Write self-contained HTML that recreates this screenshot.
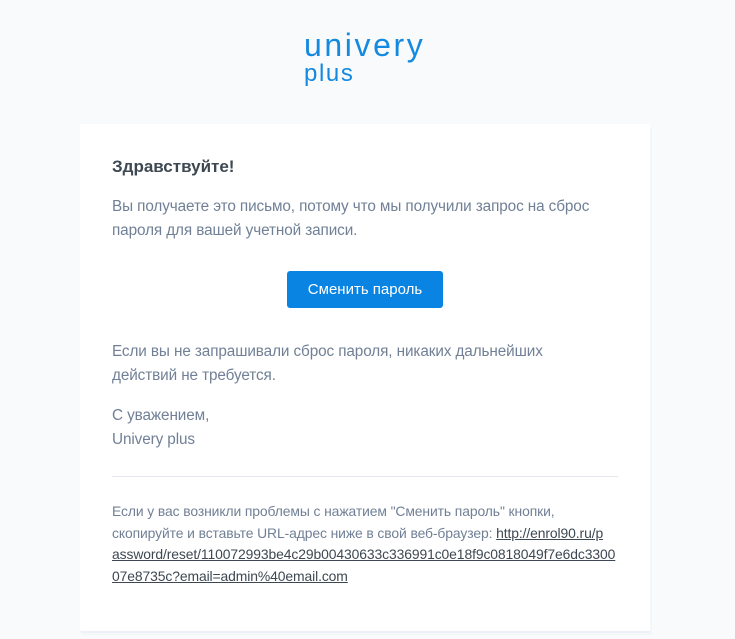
<!DOCTYPE html>
<html><head><meta charset="utf-8"><style>
html,body{margin:0;padding:0;background:#f8fafc;width:735px;height:639px;overflow:hidden;font-family:"Liberation Sans",sans-serif;}
.logo{position:absolute;left:304px;top:30px;color:#1489e0;font-size:32px;line-height:30px;letter-spacing:2.6px;}
.logo .p{font-size:24px;line-height:28px;display:block;letter-spacing:1.6px;}
.card{position:absolute;left:80px;top:124px;width:570px;height:507px;background:#fff;box-shadow:0 2px 0 rgba(0,0,150,0.025),2px 4px 0 rgba(0,0,150,0.015);}
.in{position:absolute;left:32px;width:520px;}
p{margin:0;color:#718096;font-size:15.3px;line-height:24px;letter-spacing:-0.1px;}
.btn{position:absolute;left:207px;top:147px;width:156px;height:37px;background:#0a84e3;border-radius:3px;color:#fff;font-size:15px;line-height:37px;text-align:center;}
.hr{position:absolute;left:32px;top:352px;width:506px;border-top:1px solid #e8e5ef;}
.sm{font-size:13.9px;line-height:21.7px;color:#718096;letter-spacing:-0.1px;}
.sm a{color:#3d4852;text-decoration:underline;}
</style></head><body>
<div class="logo">univery<span class="p">plus</span></div>
<div class="card">
<div class="in" style="top:33px"><b style="font-size:17px;color:#3d4852">Здравствуйте!</b></div>
<div class="in" style="top:71px"><p>Вы получаете это письмо, потому что мы получили запрос на сброс<br>пароля для вашей учетной записи.</p></div>
<div class="btn">Сменить пароль</div>
<div class="in" style="top:216px"><p>Если вы не запрашивали сброс пароля, никаких дальнейших<br>действий не требуется.</p></div>
<div class="in" style="top:280px"><p>С уважением,<br>Univery plus</p></div>
<div class="hr"></div>
<div class="in sm" style="top:377px">Если у вас возникли проблемы с нажатием "Сменить пароль" кнопки,<br>скопируйте и вставьте URL-адрес ниже в свой веб-браузер: <a>http://enrol90.ru/p<br>assword/reset/110072993be4c29b00430633c336991c0e18f9c0818049f7e6dc3300<br>07e8735c?email=admin%40email.com</a></div>
</div>
</body></html>
